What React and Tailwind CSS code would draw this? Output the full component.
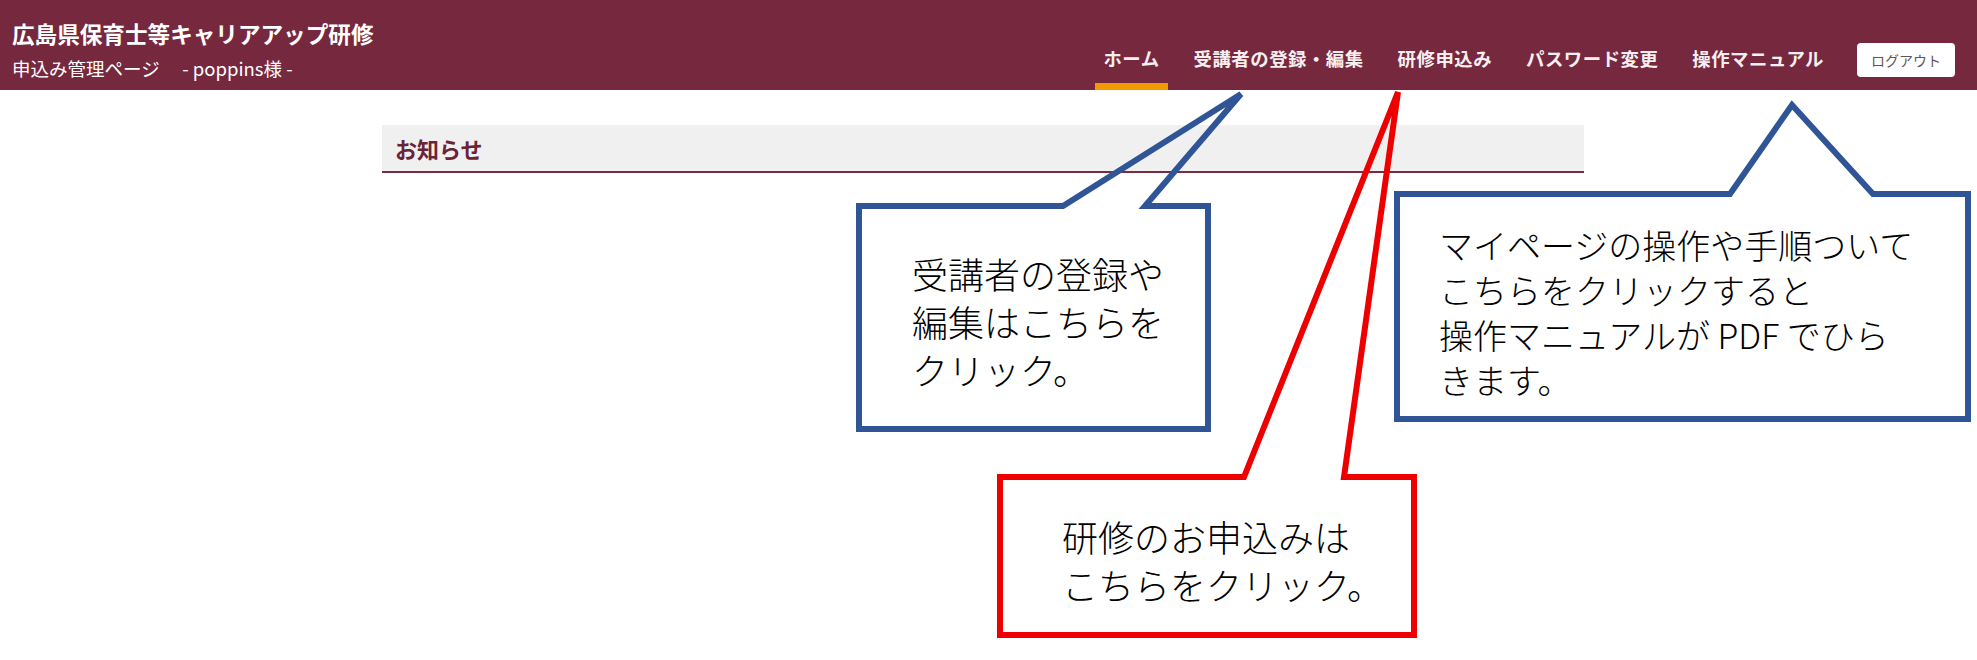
import React from "react";

const navItems = [
  { label: "ホーム", active: true },
  { label: "受講者の登録・編集" },
  { label: "研修申込み" },
  { label: "パスワード変更" },
  { label: "操作マニュアル" },
];

function Header() {
  return (
    <header className="h-[90px] bg-[#76293e] flex justify-between pl-[12px] pr-[22px] text-white">
      <div className="pt-[18px]">
        <div className="text-[22.6px] leading-[32px] font-bold">広島県保育士等キャリアアップ研修</div>
        <div className="mt-[6px] text-[18.5px] leading-[24px] whitespace-pre">
          申込み管理ページ　 - poppins様 -
        </div>
      </div>
      <nav className="flex items-end h-full">
        <div className="flex items-end gap-[18px]">
          {navItems.map((item) => (
            <a key={item.label} className="flex flex-col justify-end h-[90px] cursor-pointer">
              <span className="px-[8px] text-[18.4px] leading-[26px] font-bold tracking-[0.5px] text-[#f7eef0]">
                {item.label}
              </span>
              <div className={"mt-[12px] h-[7px] " + (item.active ? "bg-[#f39a00]" : "bg-transparent")} />
            </a>
          ))}
        </div>
        <button className="ml-[25px] mb-[13px] h-[34px] w-[98px] rounded-[4px] bg-white text-[14px] text-[#625457] flex items-center justify-center">
          ログアウト
        </button>
      </nav>
    </header>
  );
}

function Callouts() {
  return (
    <>
      <svg className="absolute inset-0 pointer-events-none" width="1977" height="660" viewBox="0 0 1977 660">
        <polygon
          points="859,206 1063,206 1241,94 1145,206 1208,206 1208,429 859,429"
          fill="none"
          stroke="#2f5597"
          strokeWidth="6"
          strokeLinejoin="miter"
        />
        <polygon
          points="1000,477 1244,477 1398,92 1344,477 1414,477 1414,635 1000,635"
          fill="none"
          stroke="#ee0000"
          strokeWidth="6"
          strokeLinejoin="miter"
        />
        <polygon
          points="1397,194 1730,194 1792,105 1873,194 1968,194 1968,419 1397,419"
          fill="none"
          stroke="#2f5597"
          strokeWidth="6"
          strokeLinejoin="miter"
        />
      </svg>
      <div className="absolute left-[912px] top-[249px] text-[36px] leading-[48px] font-light text-black whitespace-pre">
        {"受講者の登録や\n編集はこちらを\nクリック。"}
      </div>
      <div className="absolute left-[1062px] top-[512px] text-[36px] leading-[48px] font-light text-black whitespace-pre">
        {"研修のお申込みは\nこちらをクリック。"}
      </div>
      <div className="absolute left-[1439px] top-[222px] text-[34px] leading-[45px] font-light text-black whitespace-pre">
        {"マイページの操作や手順ついて\nこちらをクリックすると\n操作マニュアルが PDF でひら\nきます。"}
      </div>
    </>
  );
}

export default function App() {
  return (
    <div
      className="relative w-[1977px] h-[660px] bg-white overflow-hidden"
      style={{ fontFamily: '"Noto Sans CJK JP", "Noto Sans", sans-serif' }}
    >
      <Header />
      <main className="pt-[35px]">
        <section className="ml-[382px] w-[1202px] h-[48px] bg-[#f0f0f0] border-b-2 border-[#7a2b40] flex items-center pl-[13px]">
          <h2 className="text-[22px] font-bold text-[#6a2436]">お知らせ</h2>
        </section>
      </main>
      <Callouts />
    </div>
  );
}
